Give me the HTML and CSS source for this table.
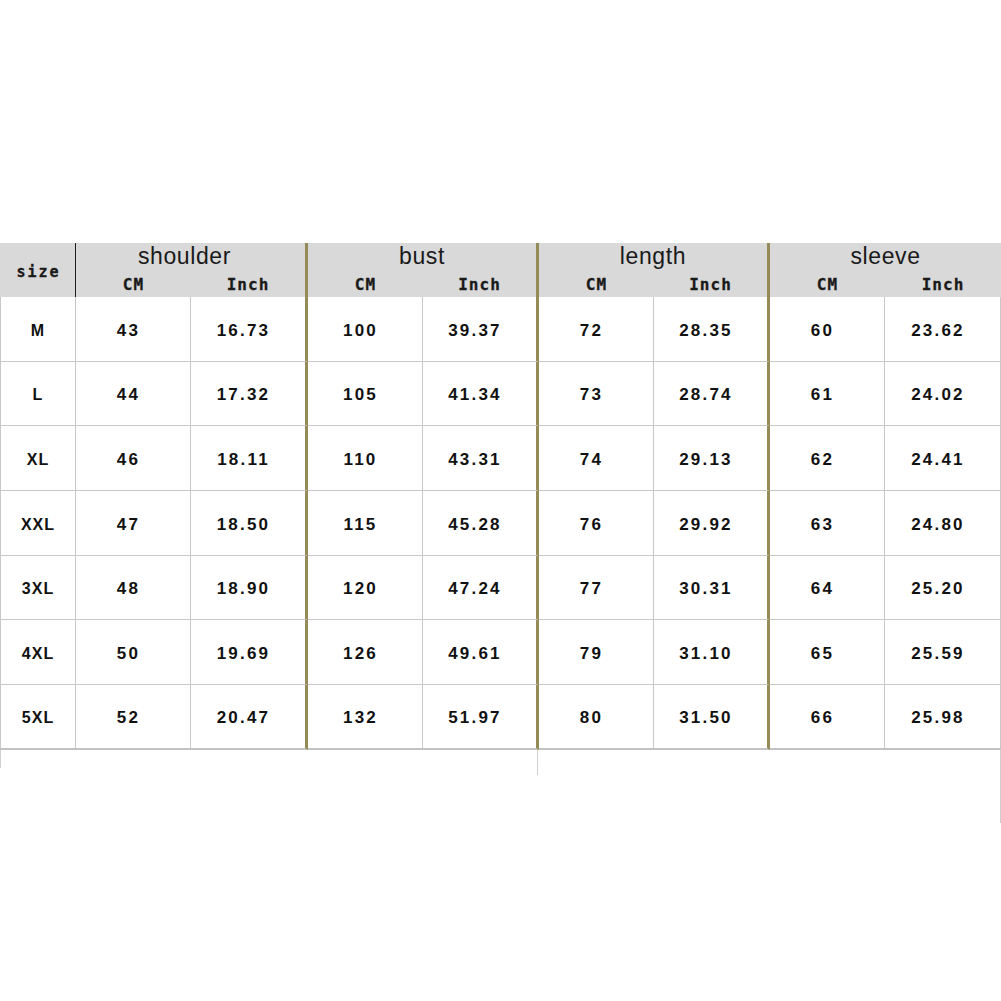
FILE: index.html
```html
<!DOCTYPE html>
<html>
<head>
<meta charset="utf-8">
<title>Size chart</title>
<link rel="stylesheet" href="styles.css">
</head>
<body>
<div class="sheet">
  <div class="chart">
    <div class="h-size">size</div>
    <div class="h-group first sep">shoulder</div>
    <div class="h-group sep">bust</div>
    <div class="h-group sep">length</div>
    <div class="h-group">sleeve</div>
    <div class="h-sub">CM</div><div class="h-sub sep">Inch</div>
    <div class="h-sub">CM</div><div class="h-sub sep">Inch</div>
    <div class="h-sub">CM</div><div class="h-sub sep">Inch</div>
    <div class="h-sub">CM</div><div class="h-sub">Inch</div>

    <div class="c size">M</div><div class="c">43</div><div class="c sep">16.73</div><div class="c">100</div><div class="c sep">39.37</div><div class="c">72</div><div class="c sep">28.35</div><div class="c">60</div><div class="c">23.62</div>
    <div class="c size">L</div><div class="c">44</div><div class="c sep">17.32</div><div class="c">105</div><div class="c sep">41.34</div><div class="c">73</div><div class="c sep">28.74</div><div class="c">61</div><div class="c">24.02</div>
    <div class="c size">XL</div><div class="c">46</div><div class="c sep">18.11</div><div class="c">110</div><div class="c sep">43.31</div><div class="c">74</div><div class="c sep">29.13</div><div class="c">62</div><div class="c">24.41</div>
    <div class="c size">XXL</div><div class="c">47</div><div class="c sep">18.50</div><div class="c">115</div><div class="c sep">45.28</div><div class="c">76</div><div class="c sep">29.92</div><div class="c">63</div><div class="c">24.80</div>
    <div class="c size">3XL</div><div class="c">48</div><div class="c sep">18.90</div><div class="c">120</div><div class="c sep">47.24</div><div class="c">77</div><div class="c sep">30.31</div><div class="c">64</div><div class="c">25.20</div>
    <div class="c size">4XL</div><div class="c">50</div><div class="c sep">19.69</div><div class="c">126</div><div class="c sep">49.61</div><div class="c">79</div><div class="c sep">31.10</div><div class="c">65</div><div class="c">25.59</div>
    <div class="c size last">5XL</div><div class="c last">52</div><div class="c sep last">20.47</div><div class="c last">132</div><div class="c sep last">51.97</div><div class="c last">80</div><div class="c sep last">31.50</div><div class="c last">66</div><div class="c last">25.98</div>
  </div>
  <div class="tail">
    <div class="tail-left"></div>
    <div class="tail-mid"></div>
  </div>
</div>
</body>
</html>
```

FILE: styles.css
```css
* { box-sizing: border-box; }
html, body { margin: 0; padding: 0; background: #fff; }
.sheet {
  padding-top: 243px;
  width: 1001px;
}
.chart {
  display: grid;
  grid-template-columns: 76px 115px 117px 115px 116px 115px 116px 115px 116px;
  grid-template-rows: 26px 28px 65px 64px 65px 65px 64px 65px 65px;
  width: 1001px;
  color: #111;
}
.h-size {
  grid-row: span 2;
  background: #d9d9d9;
  border-right: 1px solid #1e1e1e;
  display: flex;
  align-items: center;
  justify-content: center;
  font-family: "DejaVu Sans Mono", monospace;
  font-weight: bold;
  font-size: 15px;
  letter-spacing: 2px;
  padding-left: 2px;
  padding-top: 3px;
  color: #1a1a1a;
  -webkit-text-stroke: 0.3px #1a1a1a;
}
.h-group {
  grid-column: span 2;
  background: #d9d9d9;
  font-family: "Liberation Sans", Arial, sans-serif;
  font-size: 23px;
  letter-spacing: 0.6px;
  line-height: 26px;
  text-align: center;
  color: #1a1a1a;
}
.h-group.first { padding-right: 12px; }
.h-sub {
  background: #d9d9d9;
  font-family: "DejaVu Sans Mono", monospace;
  font-weight: bold;
  font-size: 16px;
  letter-spacing: 1px;
  line-height: 28px;
  padding-top: 2px;
  text-align: center;
  color: #1a1a1a;
  -webkit-text-stroke: 0.3px #1a1a1a;
}
.sep { border-right: 3px solid #958b57 !important; }
.c {
  display: flex;
  align-items: center;
  justify-content: center;
  padding-right: 9px;
  padding-top: 3px;
  border-right: 1px solid #c8c8c8;
  border-bottom: 1px solid #c8c8c8;
  font-family: "Liberation Sans", Arial, sans-serif;
  font-weight: bold;
  font-size: 17px;
  letter-spacing: 2.2px;
  color: #111;
}
.c.size {
  border-left: 1px solid #c8c8c8;
  font-size: 16px;
  letter-spacing: 1px;
  padding-right: 0;
}
.c.last { border-bottom: 2px solid #c2c2c2; }
.tail {
  display: flex;
  align-items: flex-start;
  height: 73px;
  width: 1001px;
  border-right: 1px solid #cfcfcf;
}
.tail-left {
  width: 537px;
  height: 18px;
  border-left: 1px solid #d0d0d0;
}
.tail-mid {
  height: 25px;
  border-left: 1px solid #d0d0d0;
}
```
